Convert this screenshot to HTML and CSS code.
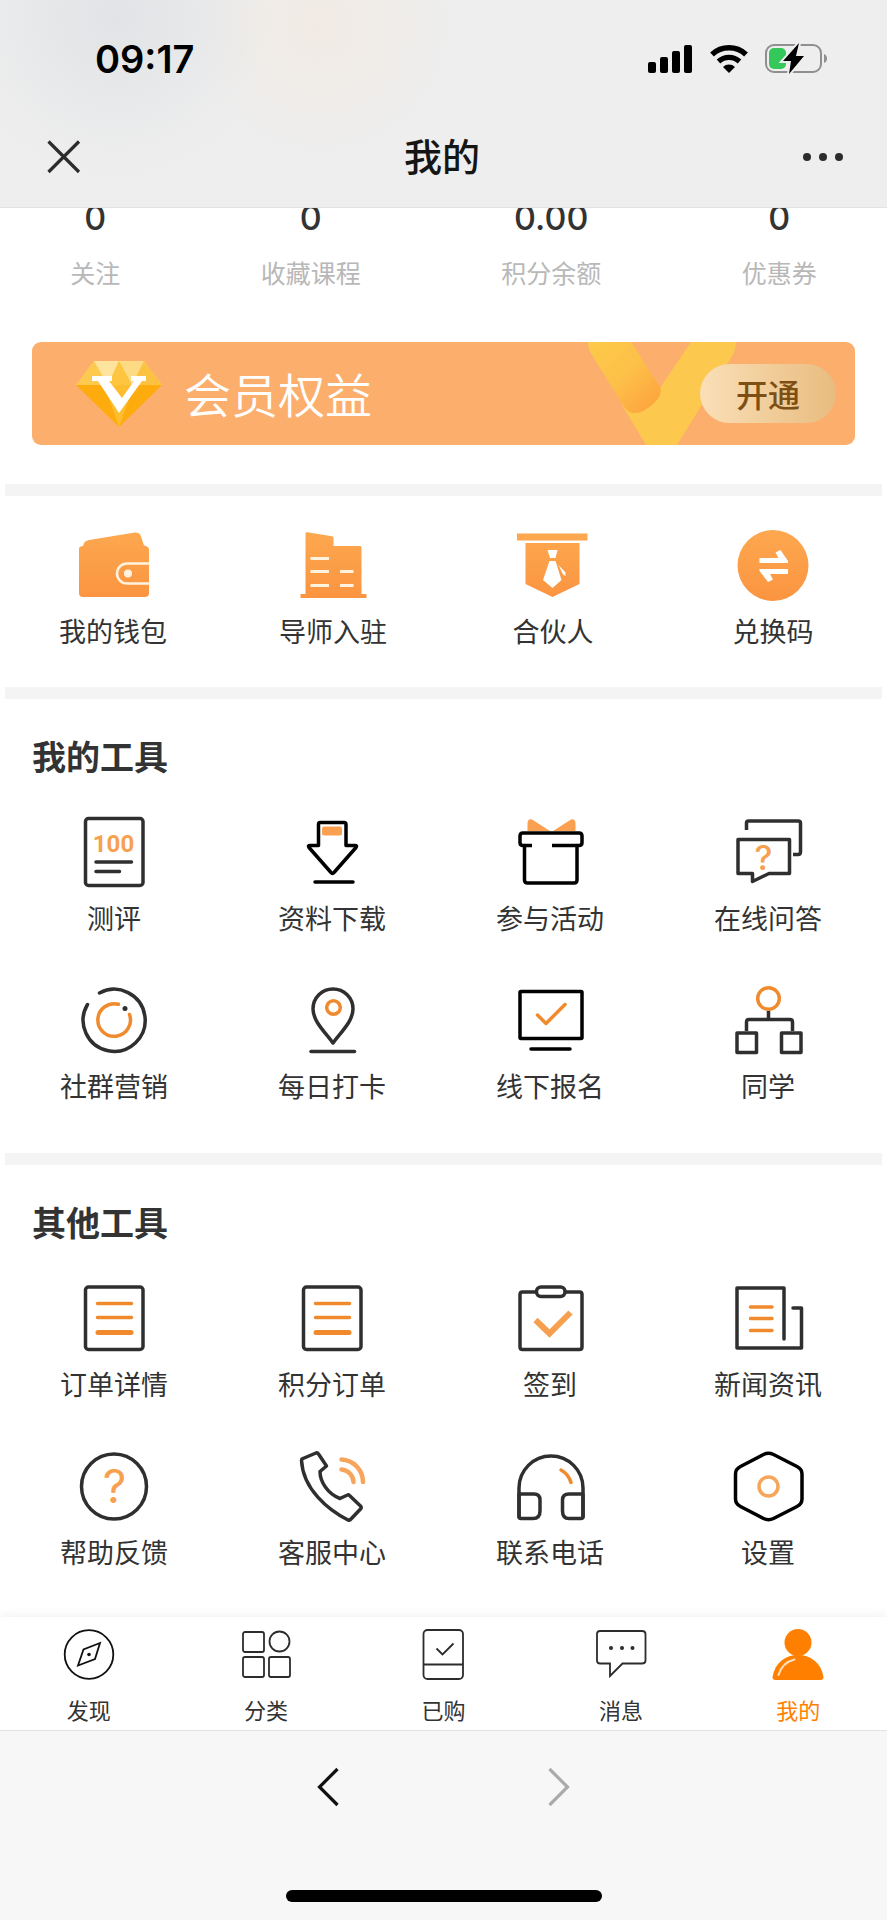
FILE: index.html
```html
<!DOCTYPE html>
<html lang="zh-CN">

<head>
  <meta charset="utf-8">
  <meta name="viewport" content="width=device-width, initial-scale=1">
  <title>我的</title>
  <link rel="stylesheet" href="styles.css">
</head>

<body>
  <svg class="defs" width="0" height="0" aria-hidden="true">
    <defs>
      <linearGradient id="orange" x1="0" y1="0" x2="0" y2="1">
        <stop offset="0" stop-color="#fda850" />
        <stop offset="1" stop-color="#fb9440" />
      </linearGradient>
      <linearGradient id="arm" x1="0" y1="0" x2="1" y2="1">
        <stop offset="0" stop-color="#fccb4a" />
        <stop offset="0.5" stop-color="#fdbf48" />
        <stop offset="1" stop-color="#fd9f3c" />
      </linearGradient>
    </defs>
  </svg>

  <header class="header">
    <div class="status-bar">
      <span class="time">09:17</span>
      <div class="status-icons">
        <svg width="45" height="28" viewBox="0 0 45 28">
          <rect x="0" y="17" width="8" height="11" rx="2" />
          <rect x="12" y="12" width="8" height="16" rx="2" />
          <rect x="24" y="6" width="8" height="22" rx="2" />
          <rect x="36" y="0" width="8" height="28" rx="2" />
        </svg>
        <svg width="38" height="28" viewBox="0 0 38 28">
          <path d="M2 9.500A25 25 0 0 1 36 9.500" fill="none" stroke="#000" stroke-width="5.500" />
          <path d="M8.500 16.500A15.500 15.500 0 0 1 29.500 16.500" fill="none" stroke="#000" stroke-width="5.200" />
          <path d="M13 22A8.500 8.500 0 0 1 25 22L19 28Z" />
        </svg>
        <svg width="62" height="32" viewBox="0 0 62 32">
          <rect x="1" y="2" width="55" height="27" rx="8" fill="none" stroke="#8f8f8f" stroke-width="2" />
          <path d="M59 11C63 12 63 19 59 20Z" fill="#8f8f8f" />
          <rect x="4" y="5" width="17" height="21" rx="5" fill="#34c759" />
          <path d="M34 0L18 18H26L24 31L39 13H31Z" stroke="#eee" stroke-width="4" />
          <path d="M34 0L18 18H26L24 31L39 13H31Z" />
        </svg>
      </div>
    </div>
    <div class="nav-bar">
      <button class="icon-btn" type="button" aria-label="关闭">
        <svg width="34" height="34" viewBox="0 0 34 34">
          <path d="M1.500 1.500L32 32M32 1.500L1.500 32" fill="none" stroke="#2c2c2c" stroke-width="3.200" />
        </svg>
      </button>
      <h1 class="nav-title">我的</h1>
      <button class="icon-btn" type="button" aria-label="更多">
        <svg width="40" height="34" viewBox="0 0 40 34" fill="#2c2c2c">
          <circle cx="4" cy="17" r="4" />
          <circle cx="20" cy="17" r="4" />
          <circle cx="36" cy="17" r="4" />
        </svg>
      </button>
    </div>
  </header>

  <main class="content">
    <ul class="stats">
      <li><span class="stat-num">0</span><span class="stat-label">关注</span></li>
      <li><span class="stat-num">0</span><span class="stat-label">收藏课程</span></li>
      <li><span class="stat-num">0.00</span><span class="stat-label">积分余额</span></li>
      <li><span class="stat-num">0</span><span class="stat-label">优惠券</span></li>
    </ul>

    <div class="vip">
      <svg class="vip-mark" width="148" height="103" viewBox="0 0 148 103">
        <path d="M103 0H148Q148 7 144 14L89 103H58L34 63L72 46Z" fill="#fcc84d" />
        <path d="M0 0H43Q47 5 52 14L72 45Q75 53 66 61Q55 72 45 71Q38 70 33 60L4 13Q0 7 0 0Z" fill="url(#arm)" />
      </svg>
      <svg width="86" height="66" viewBox="0 0 86 66">
        <path d="M18 0H68L86 24H0Z" fill="#fdd160" />
        <path d="M18 0L32 24H0Z" fill="#fdc94e" />
        <path d="M18 0H43L32 24Z" fill="#fee49c" />
        <path d="M43 0H68L56 24Z" fill="#fddb85" />
        <path d="M68 0L86 24H56Z" fill="#fcc343" />
        <path d="M43 0L56 24H32Z" fill="#fdc540" />
        <path d="M0 24H86L43 66Z" fill="#fdab0d" />
        <path d="M28 24H58L43 66Z" fill="#fdbd2f" />
        <path d="M16 15H36V20H33L46 37L58 20H55V15H70V20H66L43 52L22 20H16Z" fill="#fff" />
      </svg>
      <span class="vip-title">会员权益</span>
      <button class="vip-btn" type="button">开通</button>
    </div>

    <nav class="quick">
      <a href="#" class="item">
        <svg width="72" height="72" viewBox="0 0 72 72" fill="url(#orange)">
          <path d="M6 16L7 13Q8 11 12 10L58 2.500Q62 2 63.500 5L67 15.500Q72 16 72 20V63Q72 67 68 67H6Q2 67 2 63V19Q2 16 6 16Z" />
          <path d="M72 33.500H50A10 10 0 0 0 50 53.500H72" fill="none" stroke="#fff3df" stroke-width="2.500" />
          <circle cx="51" cy="43.500" r="4" fill="#fff3df" />
        </svg>
        <span class="item-label">我的钱包</span>
      </a>
      <a href="#" class="item">
        <svg width="72" height="72" viewBox="0 0 72 72" fill="url(#orange)">
          <path d="M8.500 3.500Q8.500 2 10.500 2.300L35 6.200Q36.500 6.500 36.500 8V16H63Q64.500 16 64.500 18V64H69.500V68H3.500V64H8.500Z" />
          <path d="M13.500 28.500H32M13.500 41.500H32M13.500 55.500H32M43 41.500H56.500M43 55.500H56.500" stroke="#fff3df" stroke-width="3" />
        </svg>
        <span class="item-label">导师入驻</span>
      </a>
      <a href="#" class="item">
        <svg width="72" height="72" viewBox="0 0 72 72" fill="url(#orange)">
          <path d="M0 3.500H70.500V10.500H0ZM8.500 13H62.500V54L35.500 67L8.500 54Z" />
          <path d="M30.500 20H40.500L38.500 28H33ZM32.500 31H38.500L44.500 50L35.500 58L26 50ZM41.500 35L48.500 42.500V46L46 44.500Z" fill="#fff" />
        </svg>
        <span class="item-label">合伙人</span>
      </a>
      <a href="#" class="item">
        <svg width="72" height="72" viewBox="0 0 72 72" fill="url(#orange)">
          <circle cx="36" cy="35.500" r="35.500" />
          <path d="M22.500 28H41.500L38.500 22.500L43.500 20L51 31V33H22.500ZM51 44H33L36 49.500L31 52L22.500 41V39H51Z" fill="#fff" />
        </svg>
        <span class="item-label">兑换码</span>
      </a>
    </nav>

    <section class="panel">
      <h2 class="panel-title">我的工具</h2>
      <div class="tools">
        <a href="#" class="item">
          <svg class="line-icon" width="70" height="70" viewBox="0 0 70 70">
            <rect x="6.500" y="1.500" width="57.500" height="67" rx="3" />
            <path d="M17 45H52.500M17 54.500H40.500" />
            <text class="score" x="34.500" y="35" text-anchor="middle">100</text>
          </svg>
          <span class="item-label">测评</span>
        </a>
        <a href="#" class="item">
          <svg class="line-icon black" width="70" height="70" viewBox="0 0 70 70">
            <path d="M23 5.500H47Q49 5.500 49 7.500V28.500H58Q60.500 28.500 59 30.500L37 55.500Q35.500 57.500 34 55.500L12 30.500Q10.500 28.500 13 28.500H21.500V7.500Q21.500 5.500 23 5.500Z" />
            <path d="M18 65H56" />
            <rect class="soft" x="25" y="9.500" width="20" height="9" rx="2" />
          </svg>
          <span class="item-label">资料下载</span>
        </a>
        <a href="#" class="item">
          <svg class="line-icon black" width="70" height="70" viewBox="0 0 70 70">
            <path class="soft" d="M12.500 14V6Q13 1 17 2.500L35 14ZM60.500 14V6Q60 1 56 2.500L38 14Z" />
            <path d="M17 28.500H8Q5 28.500 5 25.500V19Q5 16 8 16H64Q67 16 67 19V25.500Q67 28.500 64 28.500H37" stroke-linecap="butt" />
            <path d="M9.500 28.500V63Q9.500 66 12.500 66H59Q62 66 62 63V28.500" />
          </svg>
          <span class="item-label">参与活动</span>
        </a>
        <a href="#" class="item">
          <svg class="line-icon" width="70" height="70" viewBox="0 0 70 70">
            <path d="M13.500 13V6Q13.500 4 15.500 4H65Q67.500 4 67.500 6V35Q67.500 37.500 65 37.500H60" stroke-linecap="butt" />
            <path d="M5 22.500H56.500V56.500H36L19.500 64.500V56.500H5Z" />
            <text class="mark small" x="30.500" y="53" text-anchor="middle">?</text>
          </svg>
          <span class="item-label">在线问答</span>
        </a>
        <a href="#" class="item">
          <svg class="line-icon" width="70" height="70" viewBox="0 0 70 70">
            <path d="M20.500 8A31 31 0 1 1 8.500 19.500" />
            <path class="accent" d="M39.500 19.300A16.300 16.300 0 1 0 50.500 29.500" />
            <circle cx="46" cy="23.500" r="2.500" fill="#2f2f2f" stroke="none" />
          </svg>
          <span class="item-label">社群营销</span>
        </a>
        <a href="#" class="item">
          <svg class="line-icon" width="70" height="70" viewBox="0 0 70 70">
            <path d="M36 58C30 49 16 37 16 24A20 20 0 0 1 56 24C56 37 42 49 36 58Z" />
            <circle class="accent" cx="36.500" cy="22.500" r="6.800" />
            <path d="M14 66.500H57.500" />
          </svg>
          <span class="item-label">每日打卡</span>
        </a>
        <a href="#" class="item">
          <svg class="line-icon black" width="70" height="70" viewBox="0 0 70 70">
            <rect x="5" y="6.500" width="62" height="47" rx="1" />
            <path class="accent" d="M22.500 30L31 38.500L50 19.500" />
            <path d="M16 64H55" />
          </svg>
          <span class="item-label">线下报名</span>
        </a>
        <a href="#" class="item">
          <svg class="line-icon" width="70" height="70" viewBox="0 0 70 70">
            <circle class="accent" cx="35.500" cy="13.500" r="10.800" />
            <path d="M35.500 26V34.500M13.500 46V37Q13.500 34.500 16 34.500H57Q59.500 34.500 59.500 37V46" stroke-linecap="butt" />
            <rect x="4" y="48" width="19.500" height="19.500" />
            <rect x="48.500" y="48" width="19.500" height="19.500" />
          </svg>
          <span class="item-label">同学</span>
        </a>
      </div>
    </section>

    <section class="panel">
      <h2 class="panel-title">其他工具</h2>
      <div class="tools">
        <a href="#" class="item">
          <svg class="line-icon" width="70" height="70" viewBox="0 0 70 70">
            <rect x="6.500" y="4" width="57.500" height="62.500" rx="3" />
            <path class="accent" d="M18.500 20.500H52.500M18.500 34.500H52.500" />
            <path class="accent wide" d="M19 49.500H52" />
          </svg>
          <span class="item-label">订单详情</span>
        </a>
        <a href="#" class="item">
          <svg class="line-icon" width="70" height="70" viewBox="0 0 70 70">
            <rect x="6.500" y="4" width="57.500" height="62.500" rx="3" />
            <path class="accent" d="M18.500 20.500H52.500M18.500 34.500H52.500" />
            <path class="accent wide" d="M19 49.500H52" />
          </svg>
          <span class="item-label">积分订单</span>
        </a>
        <a href="#" class="item">
          <svg class="line-icon" width="70" height="70" viewBox="0 0 70 70">
            <path d="M21 9H7.500Q5 9 5 11.500V64Q5 66.500 7.500 66.500H64.500Q67 66.500 67 64V11.500Q67 9 64.500 9H50.500" />
            <rect x="21.500" y="4" width="28.500" height="9.500" rx="4.500" />
            <path d="M20.500 37L34.500 50.500L55.500 29.500" stroke="#f6a04f" stroke-width="6" stroke-linecap="butt" stroke-linejoin="miter" />
          </svg>
          <span class="item-label">签到</span>
        </a>
        <a href="#" class="item">
          <svg class="line-icon" width="70" height="70" viewBox="0 0 70 70">
            <path d="M51 56V5H4V65H68.500V25H60" />
            <path class="accent" d="M17.500 24H39M17.500 35.500H39M17.500 47.500H39" />
          </svg>
          <span class="item-label">新闻资讯</span>
        </a>
        <a href="#" class="item">
          <svg class="line-icon" width="70" height="70" viewBox="0 0 70 70">
            <circle cx="35" cy="35.500" r="32.500" />
            <text class="mark" x="35.500" y="52" text-anchor="middle">?</text>
          </svg>
          <span class="item-label">帮助反馈</span>
        </a>
        <a href="#" class="item">
          <svg class="line-icon" width="70" height="70" viewBox="0 0 70 70">
            <path d="M4.500 9.500Q4.500 8 6 7.500L19 2Q20.500 1.500 21.500 3L29.500 15L23 20.500C23 31 31 43 43 47.500L50.500 44Q51.500 43.500 52.500 44.500L63.500 55Q65 56.500 63.500 58L54 68Q53 69.500 51 69C31 59 6 38 4.500 9.500Z" />
            <path class="soft-line" d="M44.500 8.500A22.500 22.500 0 0 1 66 31M44.500 18.500A13 13 0 0 1 56.500 31" />
          </svg>
          <span class="item-label">客服中心</span>
        </a>
        <a href="#" class="item">
          <svg class="line-icon" width="70" height="70" viewBox="0 0 70 70">
            <path d="M4 66V37A32 32 0 0 1 68 37V66" />
            <path d="M4 43H19Q25 43 25 49V60Q25 67.500 18 67.500H6Q4 67.500 4 65.500ZM68 43H54Q47.500 43 47.500 49V60Q47.500 67.500 54 67.500H66Q68 67.500 68 65.500Z" />
            <path class="accent" d="M46 19A21 21 0 0 1 56 31.500" />
          </svg>
          <span class="item-label">联系电话</span>
        </a>
        <a href="#" class="item">
          <svg class="line-icon black" width="70" height="70" viewBox="0 0 70 70">
            <path d="M30.500 3.500Q35.500 1 40.500 3.500L64 15.500Q69 18 69 23V48Q69 53 64 55.500L40.500 67.500Q35.500 70 30.500 67.500L7.500 55.500Q2.500 53 2.500 48V23Q2.500 18 7.500 15.500Z" />
            <circle cx="35.500" cy="35.500" r="9.500" stroke="#f6a65a" />
          </svg>
          <span class="item-label">设置</span>
        </a>
      </div>
    </section>
  </main>

  <nav class="tab-bar">
    <a href="#" class="tab">
      <svg class="tab-icon" width="52" height="52" viewBox="0 0 52 52">
        <circle cx="26" cy="25.500" r="24.300" stroke="#111" />
        <path d="M37 14L20.500 20.500L15 36.500L32 30Z" stroke="#111" />
        <circle cx="26" cy="25.500" r="1.800" fill="#111" stroke="none" />
      </svg>
      <span>发现</span>
    </a>
    <a href="#" class="tab">
      <svg class="tab-icon" width="52" height="52" viewBox="0 0 52 52">
        <rect x="3" y="3" width="21" height="20" rx="2" />
        <circle cx="39.500" cy="12.500" r="10" />
        <rect x="3" y="28" width="21" height="20" rx="2" />
        <rect x="29" y="28" width="21" height="20" rx="2" />
      </svg>
      <span>分类</span>
    </a>
    <a href="#" class="tab">
      <svg class="tab-icon" width="52" height="52" viewBox="0 0 52 52">
        <rect x="6.500" y="1" width="39.500" height="49" rx="4" />
        <path d="M6.500 35.500H46M19.500 19.500L25.500 25.500L36.500 14.500" />
      </svg>
      <span>已购</span>
    </a>
    <a href="#" class="tab">
      <svg class="tab-icon" width="52" height="52" viewBox="0 0 52 52">
        <path d="M5 2H47Q50.500 2 50.500 5V31.500Q50.500 34.500 47 34.500H27.500L15 47V34.500H5Q2 34.500 2 31.500V5Q2 2 5 2Z" />
        <g fill="#2c2c2c" stroke="none">
          <circle cx="16" cy="19" r="2" />
          <circle cx="27" cy="19" r="2" />
          <circle cx="37.500" cy="19" r="2" />
        </g>
      </svg>
      <span>消息</span>
    </a>
    <a href="#" class="tab active">
      <svg width="52" height="52" viewBox="0 0 52 52" fill="#ff7f00">
        <circle cx="26" cy="13.500" r="13.500" />
        <path d="M0.500 48C3 33 14 26 26 26S49 33 51.500 48Q51.500 51 48.500 51H3.500Q0.500 51 0.500 48Z" />
        <path d="M6.500 46C9 38 14 32.500 22.500 30.500" fill="none" stroke="#ffe0bd" stroke-width="2" stroke-linecap="round" />
      </svg>
      <span>我的</span>
    </a>
  </nav>

  <footer class="browser-bar">
    <div class="history">
      <button class="icon-btn" type="button" aria-label="后退">
        <svg width="60" height="38" viewBox="0 0 60 38" fill="none" stroke="#111" stroke-width="3.200">
          <path d="M39.500 1L21.500 19L39.500 37" />
        </svg>
      </button>
      <button class="icon-btn" type="button" aria-label="前进" disabled>
        <svg width="60" height="38" viewBox="0 0 60 38" fill="none" stroke="#ababab" stroke-width="3.200">
          <path d="M20.500 1L38.500 19L20.500 37" />
        </svg>
      </button>
    </div>
    <div class="home-indicator"></div>
  </footer>
</body>

</html>
```
FILE: styles.css
```css
* {
  box-sizing: border-box;
}

body {
  display: flex;
  flex-direction: column;
  min-height: 100vh;
  margin: 0;
  background: #fff;
  color: #333;
  font-family: "Noto Sans CJK SC", "Noto Sans", sans-serif;
}

h1,
h2,
ul {
  margin: 0;
  padding: 0;
}

li {
  list-style: none;
}

a {
  color: inherit;
  text-decoration: none;
}

svg {
  display: block;
  flex: none;
  overflow: visible;
}

button {
  border: 0;
  padding: 0;
  background: none;
  font-family: inherit;
}

.defs {
  position: absolute;
}

/* header */
.header {
  position: relative;
  z-index: 1;
  padding-bottom: 11px;
  border-bottom: 1px solid #e2e2e2;
  background:
    radial-gradient(circle at 13% 8%, #e1e3e6, rgba(225, 227, 230, 0) 160px),
    radial-gradient(circle at 36% 12%, #f1eae3, rgba(241, 234, 227, 0) 130px),
    #eee;
}

.status-bar {
  display: flex;
  align-items: center;
  justify-content: space-between;
  height: 118px;
  padding: 0 60px 0 95px;
}

.time {
  font-family: Inter, sans-serif;
  font-size: 38px;
  font-weight: 600;
  color: #000;
}

.status-icons {
  display: flex;
  align-items: center;
  gap: 17px;
}

.nav-bar {
  display: flex;
  align-items: center;
  justify-content: space-between;
  height: 78px;
  padding: 0 44px 0 47px;
}

.nav-title {
  padding-bottom: 4px;
  font-size: 38px;
  font-weight: 500;
  line-height: 48px;
  color: #151515;
}

/* counters, partly scrolled under the header */
.stats {
  display: flex;
  justify-content: space-around;
  margin-top: -12px;
}

.stats li {
  display: flex;
  flex-direction: column;
  align-items: center;
  gap: 12px;
}

.stat-num {
  font-family: Inter, sans-serif;
  font-size: 34px;
  font-weight: 500;
  line-height: 44px;
}

.stat-label {
  font-size: 25px;
  font-weight: 400;
  line-height: 40px;
  color: #b8b8b8;
}

/* membership banner */
.vip {
  position: relative;
  display: flex;
  align-items: center;
  height: 103px;
  margin: 50px 32px 39px;
  padding: 0 19px 0 44px;
  border-radius: 9px;
  background: #fcae6d;
}

.vip-mark {
  position: absolute;
  top: 0;
  right: 119px;
}

.vip-title {
  margin-left: 22px;
  padding-bottom: 2px;
  font-size: 47px;
  font-weight: 350;
  line-height: 60px;
  color: #fff;
}

.vip-btn {
  position: relative;
  width: 136px;
  height: 59px;
  margin-left: auto;
  padding-bottom: 2px;
  border-radius: 30px;
  background: linear-gradient(90deg, #fadfb7, #e8bc7f);
  font-size: 32px;
  font-weight: 500;
  line-height: 56px;
  color: #7d4f14;
}

/* icon grids */
.item {
  display: flex;
  flex-direction: column;
  align-items: center;
}

.item-label {
  font-size: 27px;
  font-weight: 400;
  line-height: 40px;
}

.quick,
.panel {
  position: relative;
}

.quick::before,
.panel::before {
  content: "";
  display: block;
  height: 12px;
  margin: 0 5px;
  background: #f4f4f4;
}

.quick {
  display: grid;
  grid-template-columns: repeat(4, 1fr);
  padding: 0 4px 36px 3px;
}

.quick::before {
  grid-column: 1 / -1;
  margin: 0 1px 34px 2px;
}

.quick .item {
  gap: 9px;
}

.panel-title {
  margin: 35px 32px 39px;
  font-size: 34px;
  font-weight: 700;
  line-height: 44px;
}

.tools {
  display: grid;
  grid-template-columns: repeat(4, 1fr);
  row-gap: 47px;
  padding: 0 10px 47px 5px;
}

.panel:last-child .tools {
  padding-bottom: 45px;
}

.tools .item {
  gap: 11px;
}

.line-icon {
  fill: none;
  stroke: #2f2f2f;
  stroke-width: 3.5;
  stroke-linecap: round;
  stroke-linejoin: round;
}

.black {
  stroke: #000;
}

.accent {
  stroke: #f08a2c;
}

.wide {
  stroke-width: 5;
}

.soft {
  fill: #fba050;
  stroke: none;
}

.soft-line {
  stroke: #f6a55a;
  stroke-width: 4.5;
}

.score {
  fill: #f6a050;
  stroke: none;
  font-family: Roboto, sans-serif;
  font-size: 24px;
  font-weight: 700;
}

.mark {
  fill: #f6a050;
  stroke: none;
  font-family: Inter, sans-serif;
  font-size: 46px;
  font-weight: 400;
}

.small {
  font-size: 34px;
  font-weight: 500;
}

/* tabs */
.tab-bar {
  display: grid;
  grid-template-columns: repeat(5, 1fr);
  padding: 12px 0 6px;
  background: #fff;
  box-shadow: 0 -2px 10px rgba(0, 0, 0, .06);
}

.tab {
  display: flex;
  flex-direction: column;
  align-items: center;
  gap: 13px;
  font-size: 22px;
  font-weight: 400;
  line-height: 30px;
}

.tab-icon {
  fill: none;
  stroke: #2c2c2c;
  stroke-width: 1.8;
}

.tab.active {
  color: #ff7f00;
}

.browser-bar {
  display: flex;
  flex: 1;
  flex-direction: column;
  align-items: center;
  justify-content: space-between;
  position: relative;
  padding: 37px 0 18px;
  border-top: 1px solid #e3e3e3;
  background: #f7f7f7;
}

.history {
  display: flex;
  gap: 171px;
}

.home-indicator {
  width: 316px;
  height: 12px;
  border-radius: 6px;
  background: #000;
}
```
